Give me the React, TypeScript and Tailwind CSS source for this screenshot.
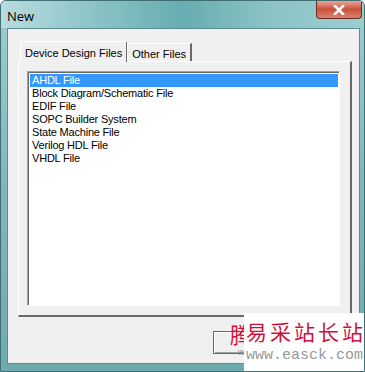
import React from "react";

const items = [
    "AHDL File",
    "Block Diagram/Schematic File",
    "EDIF File",
    "SOPC Builder System",
    "State Machine File",
    "Verilog HDL File",
    "VHDL File",
];

const App = () => {
    return (
        <div
            className="relative w-[365px] h-[372px] overflow-hidden flex flex-col bg-gradient-to-b from-[#9fcdd0] via-[#7db8bc] to-[#6eabaf] border border-[#3f6f73] rounded-t-[6px]"
            style={{ fontFamily: '"Liberation Sans", Arial, sans-serif' }}
        >
            {/* title bar */}
            <div className="h-[27px] flex items-start justify-between bg-[linear-gradient(90deg,#b9dcdf_0%,#8cc4c8_25%,#67adb1_50%,#8cc3c6_75%,#9ccdd0_100%)]">
                <span className="pl-[6px] pt-[6px] text-[13px] text-black" style={{ fontFamily: '"Open Sans", "Liberation Sans", sans-serif' }}>
                    New
                </span>
                <button className="mr-[2px] w-[46px] h-[18px] rounded-b-[4px] border border-t-0 border-[#6b2a22] bg-gradient-to-b from-[#e8a395] via-[#c9503b] to-[#d9826f] flex items-center justify-center">
                    <svg width="12" height="10" viewBox="0 0 12 10">
                        <path d="M2 1 L10 9 M10 1 L2 9" stroke="#ffffff" strokeWidth="2.6" strokeLinecap="square" />
                    </svg>
                </button>
            </div>

            {/* client area */}
            <div className="flex-1 ml-[6px] mr-[4px] mb-[7px] bg-[#f0f0f0] border border-[#5b8c90] flex flex-col pl-[10px] pr-[7px] pt-[11px]">
                {/* tabs */}
                <div className="flex items-end h-[21px] pl-[2px] text-[11px] text-black">
                    <div className="relative z-10 h-[21px] px-[4px] pt-[3px] bg-[#f0f0f0] border-t border-l border-white border-r border-r-[#696969] mb-[-1px] rounded-t-[2px]">
                        Device Design Files
                    </div>
                    <div className="h-[18px] px-[4px] pt-[2px] border-t border-l border-white border-r-2 border-r-[#696969]">
                        Other Files
                    </div>
                </div>
                {/* tab panel */}
                <div className="h-[256px] border-t border-l border-white border-r-2 border-b-2 border-r-[#696969] border-b-[#696969] pl-[8px] pr-[10px] pt-[9px] pb-[9px] flex flex-col">
                    <div className="flex-1 border-t border-l border-[#a0a0a0] border-r border-b border-r-white border-b-white">
                        <div className="h-full border-t border-l border-[#696969] bg-white pt-[1px] pl-[1px] pr-[1px]">
                            {items.map((item, i) => (
                                <div
                                    key={item}
                                    className={
                                        i === 0
                                            ? "h-[13px] leading-[13px] pl-[2px] text-[11px] tracking-[-0.2px] bg-[#3399ff] text-white"
                                            : "h-[13px] leading-[13px] pl-[2px] text-[11px] tracking-[-0.2px] text-black"
                                    }
                                >
                                    {item}
                                </div>
                            ))}
                        </div>
                    </div>
                </div>
                {/* buttons (label hidden under the watermark) */}
                <div className="flex pl-[195px] pt-[14px]">
                    <button className="w-[75px] h-[23px] border border-[#696969] bg-[#f0f0f0] shadow-[inset_1px_1px_0_#ffffff,inset_-1px_-1px_0_#a0a0a0]" />
                </div>
            </div>

            {/* watermark overlay */}
            <div className="absolute left-[229px] top-[318px] w-[14px] h-[42px] overflow-hidden">
                <span className="block text-[22px] leading-[28px] text-[#d0103a]" style={{ fontFamily: '"Noto Sans CJK SC", sans-serif' }}>
                    腾
                </span>
                <span className="block pl-[8px] text-[9px] leading-[10px] text-[#888888]">w</span>
            </div>
            <div className="absolute left-[243px] top-[312px] w-[122px] h-[60px] bg-white flex flex-col items-start pl-[2px] pt-[3px]">
                <span className="text-[21px] leading-[31px] text-[#d0103a] tracking-[3px]" style={{ fontFamily: '"Noto Sans CJK SC", sans-serif' }}>
                    易采站长站
                </span>
                <span className="text-[15px] leading-[17px] text-[#999999]" style={{ fontFamily: '"Liberation Mono", monospace' }}>
                    www.easck.com
                </span>
            </div>
        </div>
    );
};

export default App;
